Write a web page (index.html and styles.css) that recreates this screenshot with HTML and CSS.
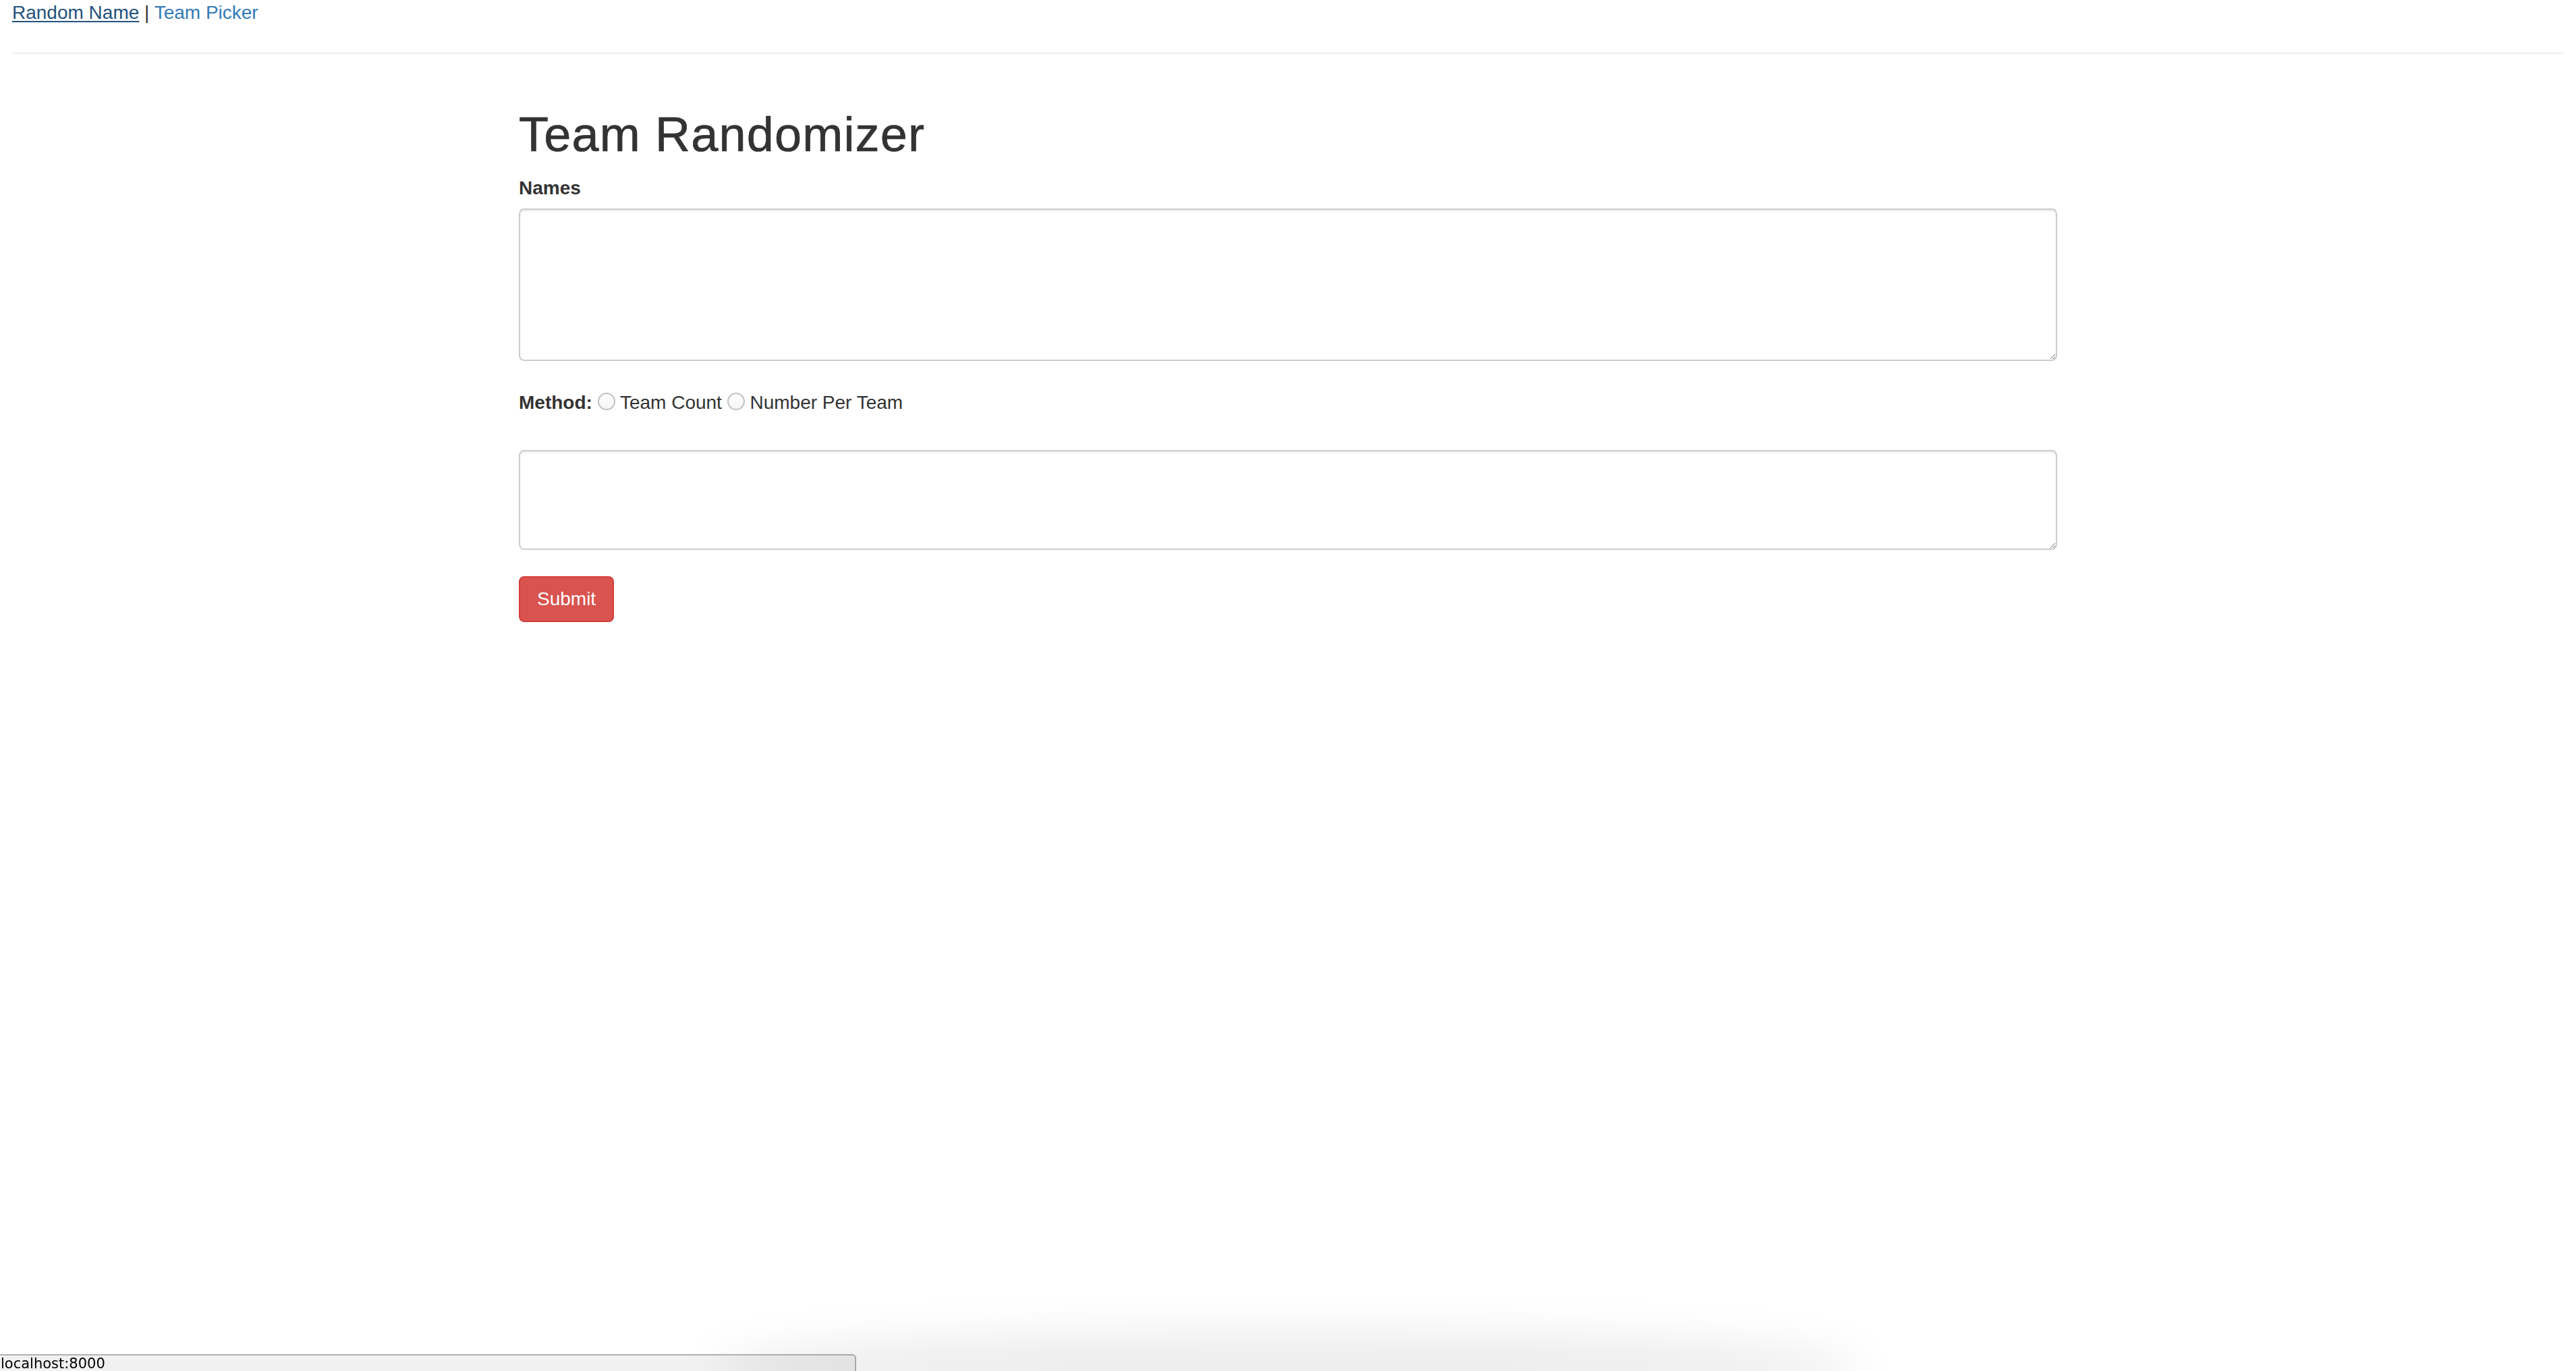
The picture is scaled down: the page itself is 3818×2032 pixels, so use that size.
FILE: index.html
```html
<!DOCTYPE html>
<html lang="en">
<head>
<meta charset="utf-8">
<title>Team Randomizer</title>
<link rel="stylesheet" href="styles.css">
</head>
<body>
  <div class="topnav">
    <a class="nav-link nav-link--active" href="#">Random Name</a> <span class="nav-sep">|</span> <a class="nav-link" href="#">Team Picker</a>
  </div>
  <hr class="divider">
  <div class="page">
    <h1 class="title">Team Randomizer</h1>
    <form class="form">
      <div class="form-group">
        <label class="field-label" for="names">Names</label>
        <textarea id="names" class="form-control form-control--names"></textarea>
      </div>
      <div class="method-row">
        <span class="method-label">Method:</span>
        <input class="radio" type="radio" name="method" id="m-count"> <label class="radio-label" for="m-count">Team Count</label>
        <input class="radio" type="radio" name="method" id="m-per"> <label class="radio-label" for="m-per">Number Per Team</label>
      </div>
      <div class="form-group">
        <textarea class="form-control form-control--value"></textarea>
      </div>
      <button type="button" class="btn-danger">Submit</button>
    </form>
  </div>
  <div class="shelf-shadow"></div>
  <div class="status-bar">localhost:8000</div>
</body>
</html>
```

FILE: styles.css
```css
html, body {
  background: #fff;
}

body {
  margin: 0 18px;
  font-family: "Liberation Sans", Helvetica, Arial, sans-serif;
  font-size: 28px;
  line-height: 40px;
  color: #333;
}

.topnav {
  height: 38px;
  line-height: 38px;
  white-space: nowrap;
}

.nav-link {
  color: #337ab7;
  text-decoration: none;
}

.nav-link--active {
  color: #23527c;
  text-decoration: underline;
  text-decoration-thickness: 2px;
  text-underline-offset: 3px;
}

.nav-sep {
  color: #333;
}

.divider {
  margin: 40px 0 40px;
  height: 0;
  border: 0;
  border-top: 2px solid #eee;
}

.page {
  display: flow-root;
  box-sizing: border-box;
  width: 2340px;
  margin: 0 auto;
  padding: 0 30px;
}

.title {
  margin: 40px 0 20px;
  font-size: 72px;
  line-height: 79px;
  font-weight: 400;
  letter-spacing: 1.2px;
  color: #333;
  -webkit-text-stroke: 0.7px #333;
}

.form {
  margin: 0;
}

.form-group {
  margin: 0;
}

.field-label {
  display: block;
  margin-bottom: 10px;
  font-weight: 700;
}

.form-control {
  display: block;
  box-sizing: border-box;
  width: 100%;
  margin: 0;
  padding: 12px 24px;
  font-family: inherit;
  font-size: 28px;
  line-height: 40px;
  color: #555;
  background: #fff;
  border: 2px solid #ccc;
  border-radius: 8px;
  box-shadow: inset 0 2px 2px rgba(0, 0, 0, 0.075);
  resize: vertical;
  outline: none;
}

.form-control--names {
  height: 226px;
}

.form-control--value {
  height: 148px;
}

.method-row {
  margin: 42px 0 50px;
  white-space: nowrap;
}

.method-label {
  font-weight: 700;
}

.radio {
  -webkit-appearance: none;
  appearance: none;
  box-sizing: border-box;
  width: 26px;
  height: 26px;
  margin: 0;
  border: 2px solid #c2c2c2;
  border-radius: 50%;
  background: linear-gradient(#ffffff, #f5f5f5);
  box-shadow: inset 0 1px 1px rgba(0, 0, 0, 0.04);
  vertical-align: -2px;
}

.radio-label {
  font-weight: 400;
}

.btn-danger {
  display: inline-block;
  margin-top: 39px;
  padding: 12px 25px;
  font-family: inherit;
  font-size: 28px;
  line-height: 40px;
  color: #fff;
  background: #d9534f;
  border: 2px solid #d43f3a;
  border-radius: 8px;
  cursor: pointer;
}

.shelf-shadow {
  position: fixed;
  left: 1060px;
  bottom: -50px;
  width: 1700px;
  height: 110px;
  border-radius: 50%;
  background: rgba(0, 0, 0, 0.07);
  filter: blur(30px);
  pointer-events: none;
  z-index: 2;
}

.status-bar {
  position: fixed;
  left: 0;
  bottom: 0;
  box-sizing: border-box;
  width: 1269px;
  height: 25px;
  padding: 1px 0 0 1px;
  overflow: hidden;
  font-family: "DejaVu Sans", "Lucida Grande", sans-serif;
  font-size: 21px;
  line-height: 22px;
  color: #000;
  white-space: nowrap;
  background: #f1f1f1;
  border-top: 2px solid #b2b2b2;
  border-right: 2px solid #b2b2b2;
  border-top-right-radius: 6px;
  z-index: 1;
}
```
